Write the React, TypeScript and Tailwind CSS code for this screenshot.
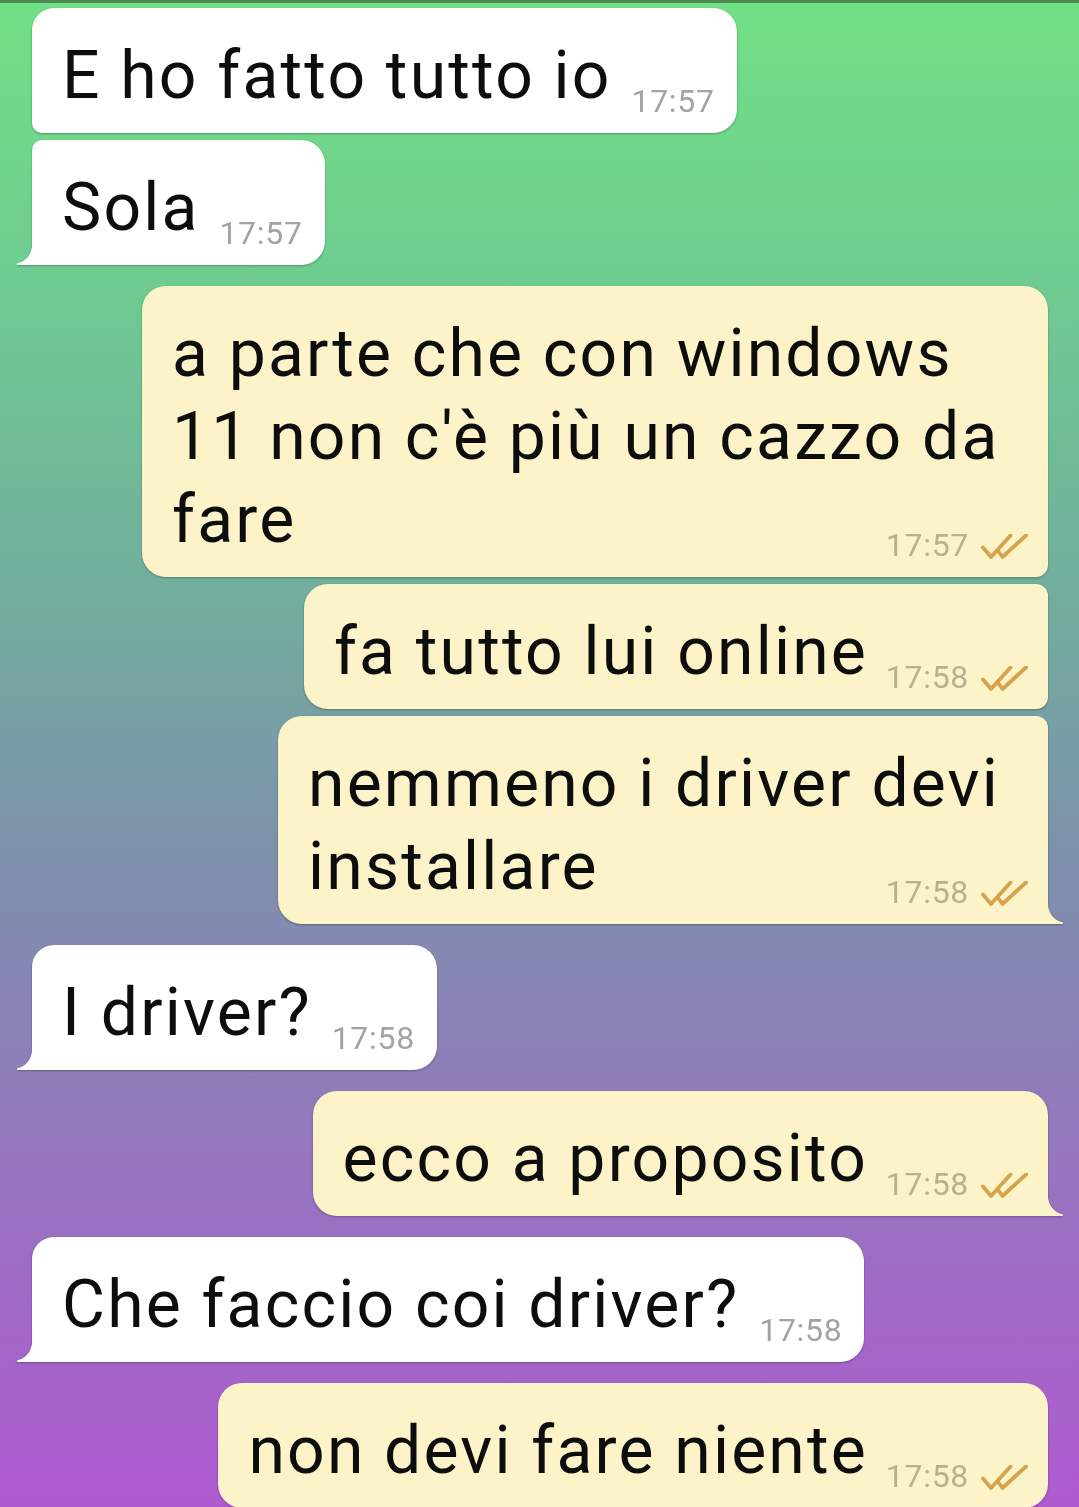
import React from "react";

type Msg = {
  side: "in" | "out";
  lines: string[];
  time: string;
  tail: boolean;
  roundTop: "big" | "small";
  roundBottom: "big" | "small";
  width?: string;
};

const groups: Msg[][] = [
  [
    { side: "in", lines: ["E ho fatto tutto io"], time: "17:57", tail: false, roundTop: "big", roundBottom: "small" },
    { side: "in", lines: ["Sola"], time: "17:57", tail: true, roundTop: "small", roundBottom: "big" },
  ],
  [
    { side: "out", lines: ["a parte che con windows", "11 non c'è più un cazzo da", "fare"], time: "17:57", tail: false, roundTop: "big", roundBottom: "small", width: "w-[906px]" },
    { side: "out", lines: ["fa tutto lui online"], time: "17:58", tail: false, roundTop: "small", roundBottom: "small" },
    { side: "out", lines: ["nemmeno i driver devi", "installare"], time: "17:58", tail: true, roundTop: "small", roundBottom: "big", width: "w-[770px]" },
  ],
  [{ side: "in", lines: ["I driver?"], time: "17:58", tail: true, roundTop: "big", roundBottom: "big" }],
  [{ side: "out", lines: ["ecco a proposito"], time: "17:58", tail: true, roundTop: "big", roundBottom: "big" }],
  [{ side: "in", lines: ["Che faccio coi driver?"], time: "17:58", tail: true, roundTop: "big", roundBottom: "big" }],
  [{ side: "out", lines: ["non devi fare niente"], time: "17:58", tail: false, roundTop: "big", roundBottom: "big" }],
];

function Checks() {
  return (
    <svg width="47" height="26" viewBox="0 0 47 26" fill="none" className="ml-[12px] mb-[1px]">
      <path d="M2 13.5 L10 23 L29.5 1.5" stroke="#d6a24c" strokeWidth="3.8" strokeLinecap="round" strokeLinejoin="round" />
      <path d="M17.5 17.5 L21.5 23 L45.5 1" stroke="#d6a24c" strokeWidth="3.8" strokeLinecap="round" strokeLinejoin="round" />
    </svg>
  );
}

function TailIn() {
  return (
    <svg width="18" height="29" viewBox="0 0 18 29" className="absolute left-[-16px] bottom-0">
      <path d="M18 0 L17 0 C17 18 11 25 1.5 27.2 Q0 27.8 1.5 29 L18 29 Z" fill="#ffffff" />
    </svg>
  );
}

function TailOut() {
  return (
    <svg width="18" height="29" viewBox="0 0 18 29" className="absolute right-[-16px] bottom-0">
      <path d="M0 0 L1 0 C1 18 7 25 16.5 27.2 Q18 27.8 16.5 29 L0 29 Z" fill="#fcf4c8" />
    </svg>
  );
}

function Bubble({ m }: { m: Msg }) {
  const isIn = m.side === "in";
  let radius = "";
  if (isIn) {
    radius += m.roundTop === "big" ? " rounded-tl-[22px]" : " rounded-tl-[10px]";
    radius += " rounded-tr-[24px] rounded-br-[24px]";
    radius += m.tail ? " rounded-bl-none" : m.roundBottom === "big" ? " rounded-bl-[22px]" : " rounded-bl-[10px]";
  } else {
    radius += m.roundTop === "big" ? " rounded-tr-[24px]" : " rounded-tr-[12px]";
    radius += " rounded-tl-[24px] rounded-bl-[24px]";
    radius += m.tail ? " rounded-br-none" : m.roundBottom === "big" ? " rounded-br-[24px]" : " rounded-br-[12px]";
  }
  return (
    <div className={`relative drop-shadow-[0_1px_1px_rgba(0,0,0,0.28)] ${isIn ? "self-start" : "self-end"}`}>
      <div
        className={`relative ${m.width ?? "w-fit"} ${isIn ? "bg-white" : "bg-[#fcf4c8]"} ${radius} pl-[30px] pt-[26px] pb-[16px] ${isIn ? "pr-[22px]" : "pr-[20px]"}`}
      >
        <div className="text-[66px] leading-[83px] tracking-[2.2px] text-[#0d0d0d] whitespace-nowrap font-['Roboto',sans-serif]">
          {m.lines.map((l, i) => (
            <React.Fragment key={i}>
              {l}
              {i < m.lines.length - 1 ? <br /> : <span className={`inline-block ${isIn ? "w-[103px]" : "w-[160px]"}`} />}
            </React.Fragment>
          ))}
        </div>
        <div className={`absolute bottom-[16px] flex items-end ${isIn ? "right-[22px]" : "right-[20px]"}`}>
          <span
            className={`text-[32px] leading-none tracking-[0.7px] font-['Roboto',sans-serif] ${isIn ? "text-[#a3a3a3]" : "text-[#bbb08d]"}`}
          >
            {m.time}
          </span>
          {!isIn && <Checks />}
        </div>
      </div>
      {m.tail && (isIn ? <TailIn /> : <TailOut />)}
    </div>
  );
}

export default function App() {
  return (
    <div className="w-[1079px] h-[1507px] overflow-hidden bg-[linear-gradient(to_bottom,#71e185_0%,#6fca92_20%,#72ad9e_40%,#7d92ab_56%,#8d80b8_70%,#a069c6_86%,#b05bd0_100%)] font-['Roboto',sans-serif]">
      <div className="h-[3px] bg-[#4e8a52]" />
      <div className="flex flex-col gap-[21px] pt-[5px] pl-[32px] pr-[31px]">
        {groups.map((g, gi) => (
          <div key={gi} className="flex flex-col gap-[7px]">
            {g.map((m, i) => (
              <Bubble key={i} m={m} />
            ))}
          </div>
        ))}
      </div>
    </div>
  );
}
